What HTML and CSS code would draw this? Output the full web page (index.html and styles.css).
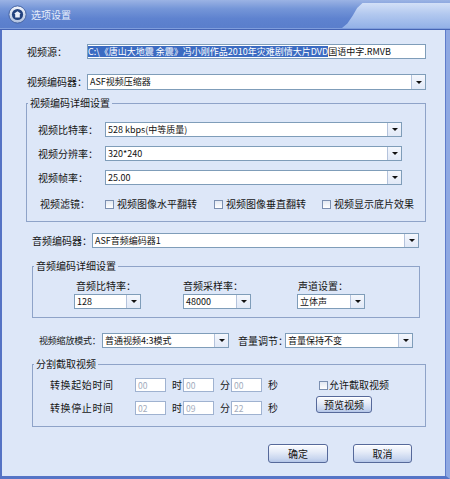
FILE: index.html
```html
<!DOCTYPE html>
<html lang="zh-CN">
<head>
<meta charset="utf-8">
<title>选项设置</title>
<link rel="stylesheet" href="styles.css">
</head>
<body>
<div class="window">
  <div class="titlebar">
    <svg class="ticon" width="19" height="19" viewBox="0 0 19 19">
      <defs>
        <linearGradient id="ring" x1="0" y1="0" x2="0" y2="1">
          <stop offset="0" stop-color="#f4f7fd"/>
          <stop offset="1" stop-color="#aebfdf"/>
        </linearGradient>
      </defs>
      <circle cx="9.5" cy="9.5" r="8.6" fill="url(#ring)" stroke="#3f5d9c" stroke-width="0.9"/>
      <circle cx="9.5" cy="9.5" r="5.6" fill="#22427f"/>
      <path d="M6.3 8.4 L9.5 6.2 L12.7 8.4 L11.8 9.2 L11.8 12.4 L7.2 12.4 L7.2 9.2 Z" fill="#e9eefa"/>
    </svg>
    <span class="ttext">选项设置</span>
  </div>
  <div class="frame">
    <div class="row row-src">
      <span class="lbl w60">视频源：</span>
      <div class="field src"><span class="hl">C:\《唐山大地震 余震》冯小刚作品2010年灾难剧情大片DVD</span>国语中字.RMVB</div>
    </div>
    <div class="row row-venc">
      <span class="lbl w60">视频编码器：</span>
      <div class="combo cw339"><span class="val">ASF视频压缩器</span><span class="arrow"></span></div>
    </div>

    <fieldset class="group g1">
      <legend>视频编码详细设置</legend>
      <div class="grow first">
        <span class="lbl w67">视频比特率：</span>
        <div class="combo cw297"><span class="val">528 kbps(中等质量)</span><span class="arrow"></span></div>
      </div>
      <div class="grow">
        <span class="lbl w67">视频分辨率：</span>
        <div class="combo cw297"><span class="val">320*240</span><span class="arrow"></span></div>
      </div>
      <div class="grow">
        <span class="lbl w67">视频帧率：</span>
        <div class="combo cw297"><span class="val">25.00</span><span class="arrow"></span></div>
      </div>
      <div class="grow filters">
        <span class="lbl w67 shift2">视频滤镜：</span>
        <span class="chk c1"><span class="box"></span>视频图像水平翻转</span>
        <span class="chk c2"><span class="box"></span>视频图像垂直翻转</span>
        <span class="chk"><span class="box"></span>视频显示底片效果</span>
      </div>
    </fieldset>

    <div class="row row-aenc">
      <span class="lbl w60">音频编码器：</span>
      <div class="combo cw327"><span class="val">ASF音频编码器1</span><span class="arrow"></span></div>
    </div>

    <fieldset class="group g2">
      <legend>音频编码详细设置</legend>
      <div class="acols">
        <div class="acol a1">
          <span class="alabel shift2">音频比特率：</span>
          <div class="combo cw67"><span class="val">128</span><span class="arrow"></span></div>
        </div>
        <div class="acol a2">
          <span class="alabel">音频采样率：</span>
          <div class="combo cw68"><span class="val">48000</span><span class="arrow"></span></div>
        </div>
        <div class="acol">
          <span class="alabel shift1">声道设置：</span>
          <div class="combo cw68"><span class="val">立体声</span><span class="arrow"></span></div>
        </div>
      </div>
    </fieldset>

    <div class="row row-scale">
      <span class="lbl w63 narrow">视频缩放模式：</span>
      <div class="combo cw127"><span class="val">普通视频4:3模式</span><span class="arrow"></span></div>
      <span class="lbl w47 vol">音量调节：</span>
      <div class="combo cw128"><span class="val">音量保持不变</span><span class="arrow"></span></div>
    </div>

    <fieldset class="group g3">
      <legend>分割截取视频</legend>
      <div class="cutbody">
        <div class="times">
          <div class="trow">
            <span class="tlabel">转换起始时间</span>
            <span class="tin">00</span><span class="unit">时</span>
            <span class="tin">00</span><span class="unit">分</span>
            <span class="tin">00</span><span class="unit">秒</span>
          </div>
          <div class="trow second">
            <span class="tlabel">转换停止时间</span>
            <span class="tin">02</span><span class="unit">时</span>
            <span class="tin">09</span><span class="unit">分</span>
            <span class="tin">22</span><span class="unit">秒</span>
          </div>
        </div>
        <div class="cutside">
          <span class="chk allow"><span class="box"></span>允许截取视频</span>
          <span class="btn preview">预览视频</span>
        </div>
      </div>
    </fieldset>

    <div class="actions">
      <span class="btn ok">确定</span>
      <span class="btn cancel">取消</span>
    </div>
  </div>
</div>
</body>
</html>
```

FILE: styles.css
```css
* { box-sizing: border-box; }
html, body { margin: 0; padding: 0; }
body {
  width: 450px;
  height: 479px;
  overflow: hidden;
  background: #dde7f8;
  font-family: "Noto Sans CJK SC", "Liberation Sans", sans-serif;
  font-size: 10px;
  color: #151515;
}

.window {
  width: 450px;
  height: 479px;
  display: flex;
  flex-direction: column;
}

/* ---------- title bar ---------- */
.titlebar {
  height: 30px;
  flex: none;
  position: relative;
  overflow: hidden;
  display: flex;
  align-items: center;
  padding-left: 8px;
  background: linear-gradient(#9bb3e4 0%, #7596d8 30%, #5e82cf 65%, #5a7ecb 100%);
  border-bottom: 1px solid #4564b4;
  box-shadow: inset 0 -1px 0 #7f9ddc;
}
.titlebar::after {
  content: "";
  position: absolute;
  right: 0;
  top: 3px;
  width: 108px;
  bottom: 1px;
  background: linear-gradient(#d3e0f7 0%, #b2c8ef 45%, #93b1e7 100%);
  clip-path: polygon(19% 0, 100% 0, 100% 100%, 0 100%, 5% 82%, 10% 50%, 14% 20%);
}
.ticon { flex: none; display: block; }
.ttext {
  margin-left: 4px;
  color: #e6edfb;
  font-size: 10px;
  line-height: 12px;
  position: relative;
  z-index: 1;
}

/* ---------- frame ---------- */
.frame {
  flex: 1;
  background: #dde7f8;
  border-left: 2px solid #5573c4;
  border-right: 4px solid #8ea8e2;
  border-bottom: 3px solid #5574c6;
  padding-top: 14px;
  box-shadow: inset -1px 0 0 #5e7ccb;
}

.row { display: flex; align-items: center; }
.lbl { flex: none; line-height: 12px; white-space: nowrap; }
.w60 { width: 60px; }
.w63 { width: 63px; }
.w67 { width: 67px; }
.w47 { width: 47px; }
.shift2 { padding-left: 2px; }
.shift1 { padding-left: 1px; }
.narrow { font-size: 9px; letter-spacing: -0.2px; }

.row-src { margin-left: 25px; height: 15px; }
.row-venc { margin-left: 25px; margin-top: 15px; height: 16px; }
.row-aenc { margin-left: 30px; margin-top: 11px; height: 15px; }
.row-scale { margin-left: 37px; margin-top: 15px; height: 15px; }
.vol { margin-left: 9px; }

/* ---------- fields ---------- */
.field {
  background: #fff;
  border: 1px solid #7f9db9;
  height: 15px;
  font-size: 9px;
  line-height: 13px;
  white-space: nowrap;
  overflow: hidden;
  color: #111;
}
.src { width: 339px; }
.hl {
  display: inline-block;
  background: #3b6bc2;
  color: #fff;
  line-height: 11px;
  vertical-align: top;
  margin-top: 1px;
}

.combo {
  flex: none;
  display: flex;
  height: 15px;
  background: #fff;
  border: 1px solid #7f9db9;
}
.row-venc .combo { height: 16px; }
.cw339 { width: 339px; }
.cw297 { width: 297px; }
.cw327 { width: 327px; }
.cw67 { width: 67px; }
.cw68 { width: 68px; }
.cw127 { width: 127px; }
.cw128 { width: 128px; }
.combo .val {
  flex: 1;
  padding-left: 2px;
  font-size: 9px;
  line-height: 13px;
  white-space: nowrap;
  overflow: hidden;
  color: #111;
}
.arrow {
  flex: none;
  width: 14px;
  border-left: 1px solid #b4c3dc;
  background: linear-gradient(#f4f7fd, #e1e9f7);
  display: flex;
  align-items: center;
  justify-content: center;
}
.arrow::before {
  content: "";
  width: 0;
  height: 0;
  border-left: 3px solid transparent;
  border-right: 3px solid transparent;
  border-top: 3px solid #111;
}

/* ---------- group boxes ---------- */
fieldset.group {
  margin: 0;
  padding: 0;
  border: 1px solid #8ea3c8;
  min-width: 0;
}
fieldset.group legend {
  padding: 0 2px;
  font-size: 10px;
  line-height: 12px;
}
fieldset.g1 { margin: 7px 0 0 24px; width: 400px; padding: 13px 0 10px 11px; }
fieldset.g2 { margin: 12px 0 0 30px; width: 388px; padding: 8px 0 8px 41px; }
fieldset.g3 { margin: 10px 0 0 30px; width: 394px; padding: 8px 0 11px 17px; }
fieldset.g1 legend { margin-left: -10px; }
fieldset.g2 legend { margin-left: -40px; }
fieldset.g3 legend { margin-left: -16px; }

.grow { display: flex; align-items: center; height: 15px; margin-top: 9px; }
.grow.first { margin-top: 0; }
.filters { margin-top: 12px; height: 14px; }

.chk { display: flex; align-items: center; white-space: nowrap; line-height: 12px; }
.chk.c1 { width: 109px; }
.chk.c2 { width: 108px; }
.box {
  flex: none;
  width: 9px;
  height: 9px;
  border: 1px solid #7b8fb0;
  background: linear-gradient(#e2e8f2, #ffffff);
  margin-right: 3px;
}

/* audio detail */
.acols { display: flex; }
.acol { display: flex; flex-direction: column; }
.acol.a1 { width: 109px; }
.acol.a2 { width: 114px; }
.alabel { line-height: 12px; height: 12px; margin-bottom: 2px; white-space: nowrap; }

/* cut section */
.cutbody { display: flex; }
.times { width: 266px; flex: none; }
.trow { display: flex; align-items: center; height: 14px; }
.trow.second { margin-top: 9px; }
.tlabel { width: 85px; flex: none; line-height: 12px; letter-spacing: 0.6px; }
.tin {
  flex: none;
  width: 31px;
  height: 14px;
  background: #fff;
  border: 1px solid #9fb2d0;
  color: #a3acbc;
  font-size: 8.5px;
  line-height: 12px;
  padding-left: 2px;
}
.unit { width: 17px; padding-left: 6px; flex: none; line-height: 12px; }

.cutside { display: flex; flex-direction: column; align-items: flex-start; }
.allow { height: 14px; margin-left: 3px; }
.allow .box { margin-right: 1px; }

/* buttons */
.btn {
  display: flex;
  align-items: center;
  justify-content: center;
  border: 1px solid #56699a;
  border-radius: 3px;
  background: linear-gradient(#fbfcff 0%, #e6ecf8 40%, #c9d6ef 80%, #b4c6e8 100%);
  box-shadow: inset 0 1px 0 #ffffff;
  font-size: 10px;
  line-height: 12px;
  color: #111;
  white-space: nowrap;
}
.preview { width: 56px; height: 17px; margin-top: 4px; }

.actions { display: flex; margin: 17px 0 0 266px; }
.ok { width: 60px; height: 19px; }
.cancel { width: 59px; height: 19px; margin-left: 25px; }
```
